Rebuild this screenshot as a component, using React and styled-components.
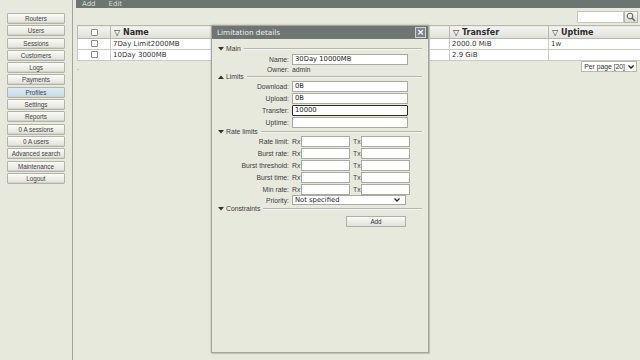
import React from "react";
import styled, { createGlobalStyle } from "styled-components";

const GlobalStyle = createGlobalStyle`
  html, body {
    margin: 0;
    padding: 0;
    background: #e8e9dd;
  }
  body {
    font-family: "Liberation Sans", Arial, sans-serif;
    color: #333;
  }
  * {
    box-sizing: border-box;
  }
`;

const menu = [
  "Routers",
  "Users",
  "Sessions",
  "Customers",
  "Logs",
  "Payments",
  "Profiles",
  "Settings",
  "Reports",
  "0 A sessions",
  "0 A users",
  "Advanced search",
  "Maintenance",
  "Logout",
];

const profiles = [
  { name: "7Day Limit2000MB", transfer: "2000.0 MiB", uptime: "1w" },
  { name: "10Day 3000MB", transfer: "2.9 GiB", uptime: "" },
];

const rateRows = ["Rate limit", "Burst rate", "Burst threshold", "Burst time", "Min rate"];

function SearchIcon() {
  return (
    <svg width="10" height="10" viewBox="0 0 10 10">
      <circle cx="4" cy="4" r="2.8" fill="none" stroke="#666" strokeWidth="1.1" />
      <line x1="6" y1="6" x2="9" y2="9" stroke="#666" strokeWidth="1.6" />
    </svg>
  );
}

function Chevron() {
  return (
    <svg width="6" height="4" viewBox="0 0 6 4">
      <path d="M0.5 0.5 L3 3 L5.5 0.5" fill="none" stroke="#222" strokeWidth="1.3" />
    </svg>
  );
}

function Triangle({ up }) {
  return (
    <svg width="6" height="4" viewBox="0 0 6 4">
      <path d={up ? "M0 4 L3 0.5 L6 4 Z" : "M0 0 L6 0 L3 3.5 Z"} fill="#333" />
    </svg>
  );
}

function Section({ title, open, first, children }) {
  return (
    <>
      <Legend $first={first}>
        <Triangle up={!open} />
        <span>{title}</span>
        <LegendLine />
      </Legend>
      {children}
    </>
  );
}

export default function App() {
  return (
    <>
      <GlobalStyle />
      <Page>
        <Sidebar>
          {menu.map((m) => (
            <MenuButton key={m} $active={m === "Profiles"}>
              {m}
            </MenuButton>
          ))}
        </Sidebar>

        <Main>
          <Toolbar>
            <ToolItem>Add</ToolItem>
            <ToolItem>Edit</ToolItem>
          </Toolbar>

          <SearchRow>
            <SearchInput />
            <SearchButton>
              <SearchIcon />
            </SearchButton>
          </SearchRow>

          <Table>
            <colgroup>
              <col style={{ width: 33 }} />
              <col style={{ width: 339 }} />
              <col style={{ width: 99 }} />
              <col style={{ width: 92 }} />
            </colgroup>
            <thead>
              <tr>
                <Th>
                  <Check />
                </Th>
                <Th>▽ Name</Th>
                <Th>▽ Transfer</Th>
                <Th>▽ Uptime</Th>
              </tr>
            </thead>
            <tbody>
              {profiles.map((p) => (
                <tr key={p.name}>
                  <Td>
                    <Check />
                  </Td>
                  <Td>{p.name}</Td>
                  <Td>{p.transfer}</Td>
                  <Td>{p.uptime}</Td>
                </tr>
              ))}
            </tbody>
          </Table>

          <FooterRow>
            <Pager>.</Pager>
            <PerPage>
              Per page [20]
              <Chevron />
            </PerPage>
          </FooterRow>
        </Main>

        <Modal>
          <TitleBar>
            <span>Limitation details</span>
            <CloseButton>×</CloseButton>
          </TitleBar>
          <ModalBody>
            <Section title="Main" open first>
              <FieldRow>
                <Label>Name:</Label>
                <TextInput defaultValue="30Day 10000MB" />
              </FieldRow>
              <InfoRow>
                <Label>Owner:</Label>
                <span>admin</span>
              </InfoRow>
            </Section>

            <Section title="Limits">
              <FieldRow>
                <Label>Download:</Label>
                <TextInput defaultValue="0B" />
              </FieldRow>
              <FieldRow>
                <Label>Upload:</Label>
                <TextInput defaultValue="0B" />
              </FieldRow>
              <FieldRow>
                <Label>Transfer:</Label>
                <TextInput defaultValue="10000" $focused />
              </FieldRow>
              <FieldRow>
                <Label>Uptime:</Label>
                <TextInput defaultValue="" />
              </FieldRow>
            </Section>

            <Section title="Rate limits" open>
              {rateRows.map((r) => (
                <FieldRow key={r}>
                  <Label>{r}:</Label>
                  <RatePair>
                    <RateTag>Rx</RateTag>
                    <RateInput />
                    <RateTag $tx>Tx</RateTag>
                    <RateInput />
                  </RatePair>
                </FieldRow>
              ))}
              <PriorityRow>
                <Label>Priority:</Label>
                <Select>
                  <span>Not specified</span>
                  <Chevron />
                </Select>
              </PriorityRow>
            </Section>

            <Section title="Constraints" open />

            <AddRow>
              <AddButton>Add</AddButton>
            </AddRow>
          </ModalBody>
        </Modal>
      </Page>
    </>
  );
}

// styles

const Page = styled.div`
  position: relative;
  display: flex;
  width: 640px;
  height: 360px;
  overflow: hidden;
  background: #e8e9dd;
`;

const Sidebar = styled.div`
  width: 73px;
  flex-shrink: 0;
  border-right: 1px solid #a3a59b;
  padding: 13px 0 0 7px;
  display: flex;
  flex-direction: column;
  gap: 1.3px;
`;

const MenuButton = styled.div`
  width: 58px;
  height: 11px;
  border: 1px solid #b2b4aa;
  border-radius: 1px;
  background: ${(p) =>
    p.$active
      ? "linear-gradient(#dcebf3, #c5dbe8)"
      : "linear-gradient(#fbfbf7, #e2e2da)"};
  box-shadow: inset 0 -1px 0 #d2d3ca;
  font-size: 6.3px;
  line-height: 9px;
  text-align: center;
  color: #444;
  white-space: nowrap;
`;

const Main = styled.div`
  flex: 1;
  display: flex;
  flex-direction: column;
  padding-left: 3px;
`;

const Toolbar = styled.div`
  height: 8px;
  background: #6d7572;
  display: flex;
  align-items: flex-end;
  gap: 13px;
  padding-left: 6px;
  overflow: hidden;
`;

const ToolItem = styled.span`
  font-family: "DejaVu Sans", Verdana, sans-serif;
  font-size: 7px;
  line-height: 8px;
  color: #d6dbd3;
`;

const SearchRow = styled.div`
  display: flex;
  justify-content: flex-end;
  align-items: center;
  height: 12px;
  margin-top: 3px;
  padding-right: 3px;
`;

const SearchInput = styled.div`
  width: 47px;
  height: 12px;
  background: #fff;
  border: 1px solid #c4c5bc;
`;

const SearchButton = styled.div`
  width: 14px;
  height: 12px;
  display: flex;
  align-items: center;
  justify-content: center;
  background: linear-gradient(#fafaf6, #dcdcd4);
  border: 1px solid #b4b6ac;
`;

const Table = styled.table`
  margin: 2px 0 0 1px;
  width: 563px;
  border-collapse: collapse;
  table-layout: fixed;
  font-family: "DejaVu Sans", Verdana, sans-serif;
  font-size: 7px;
  color: #333;
`;

const Th = styled.th`
  height: 13px;
  padding: 0 0 0 3px;
  text-align: left;
  font-size: 8px;
  font-weight: bold;
  color: #2e2e2e;
  background: linear-gradient(#f4f4f0, #e0e0da);
  border: 1px solid #b6b7ae;
  white-space: nowrap;
  &:first-child {
    text-align: center;
    padding: 0;
  }
`;

const Td = styled.td`
  height: 11px;
  padding: 0 0 0 2px;
  background: #fff;
  border: 1px solid #c9cac1;
  white-space: nowrap;
  line-height: 9px;
  &:first-child {
    text-align: center;
    padding: 0;
  }
`;

const Check = styled.span`
  display: inline-block;
  width: 7px;
  height: 7px;
  border: 1px solid #8e8f88;
  border-radius: 1px;
  background: #fff;
  vertical-align: middle;
`;

const FooterRow = styled.div`
  display: flex;
  justify-content: space-between;
  align-items: flex-start;
  padding: 0 4px 0 1px;
`;

const Pager = styled.span`
  font-size: 7px;
  line-height: 14px;
  color: #666;
`;

const PerPage = styled.div`
  display: flex;
  align-items: center;
  gap: 3px;
  height: 11px;
  padding: 0 2px;
  background: #fff;
  border: 1px solid #b7b8b0;
  font-size: 6.8px;
  color: #333;
`;

const Modal = styled.div`
  position: absolute;
  left: 211px;
  top: 25px;
  width: 218px;
  height: 328px;
  background: #e8e9dd;
  border: 1px solid #a4a69c;
  box-shadow: 1px 1px 0 #c2c4b9, 0 0 2px rgba(0, 0, 0, 0.25);
  display: flex;
  flex-direction: column;
`;

const TitleBar = styled.div`
  height: 13px;
  flex-shrink: 0;
  background: #6e7572;
  display: flex;
  align-items: center;
  justify-content: space-between;
  padding: 0 2px 0 5px;
  font-family: "DejaVu Sans", Verdana, sans-serif;
  font-size: 7.3px;
  color: #eef1ea;
`;

const CloseButton = styled.div`
  width: 11px;
  height: 11px;
  border: 1px solid #d0d3cd;
  background: #7d8487;
  color: #fff;
  font-size: 9px;
  font-weight: bold;
  line-height: 8px;
  text-align: center;
`;

const ModalBody = styled.div`
  padding: 5px 6px 0 6px;
  display: flex;
  flex-direction: column;
  font-size: 6.8px;
  color: #3c3c3c;
`;

const Legend = styled.div`
  display: flex;
  align-items: center;
  height: ${(p) => (p.$first ? "9px" : "7px")};
  gap: 2px;
  color: #3c3c3c;
`;

const LegendLine = styled.span`
  flex: 1;
  height: 2px;
  margin-left: 1px;
  border-top: 1px solid #b5b7ad;
  border-bottom: 1px solid #f6f6f0;
`;

const FieldRow = styled.div`
  display: grid;
  grid-template-columns: 71px 1fr;
  column-gap: 3px;
  align-items: center;
  height: 12px;
`;

const InfoRow = styled(FieldRow)`
  height: 8px;
`;

const PriorityRow = styled(FieldRow)`
  height: 10px;
`;

const Label = styled.span`
  text-align: right;
  white-space: nowrap;
  color: #3c3c3c;
`;

const TextInput = styled.input`
  width: 116px;
  height: 11px;
  padding: 0 2px;
  margin: 0;
  background: #fff;
  border: ${(p) => (p.$focused ? "1.5px solid #2c2c2c" : "1px solid #a9aaa2")};
  border-radius: ${(p) => (p.$focused ? "1px" : "0")};
  font-family: "DejaVu Sans", Verdana, sans-serif;
  font-size: 6.8px;
  color: #222;
  outline: none;
`;

const RatePair = styled.div`
  display: flex;
  align-items: center;
`;

const RateTag = styled.span`
  width: ${(p) => (p.$tx ? "8px" : "9px")};
  margin-left: ${(p) => (p.$tx ? "3px" : "0")};
  color: #3c3c3c;
`;

const RateInput = styled.div`
  width: 49px;
  height: 11px;
  background: #fff;
  border: 1px solid #a9aaa2;
`;

const Select = styled.div`
  width: 114px;
  height: 10px;
  display: flex;
  align-items: center;
  justify-content: space-between;
  padding: 0 5px 0 2px;
  background: #fff;
  border: 1px solid #a9aaa2;
  font-family: "DejaVu Sans", Verdana, sans-serif;
  font-size: 6.8px;
  color: #222;
`;

const AddRow = styled.div`
  display: flex;
  padding-left: 128px;
  margin-top: 4px;
`;

const AddButton = styled.div`
  width: 60px;
  height: 11px;
  border: 1px solid #aeb0a6;
  background: linear-gradient(#fbfbf7, #e0e0d8);
  font-size: 6.3px;
  line-height: 9px;
  text-align: center;
  color: #333;
`;
